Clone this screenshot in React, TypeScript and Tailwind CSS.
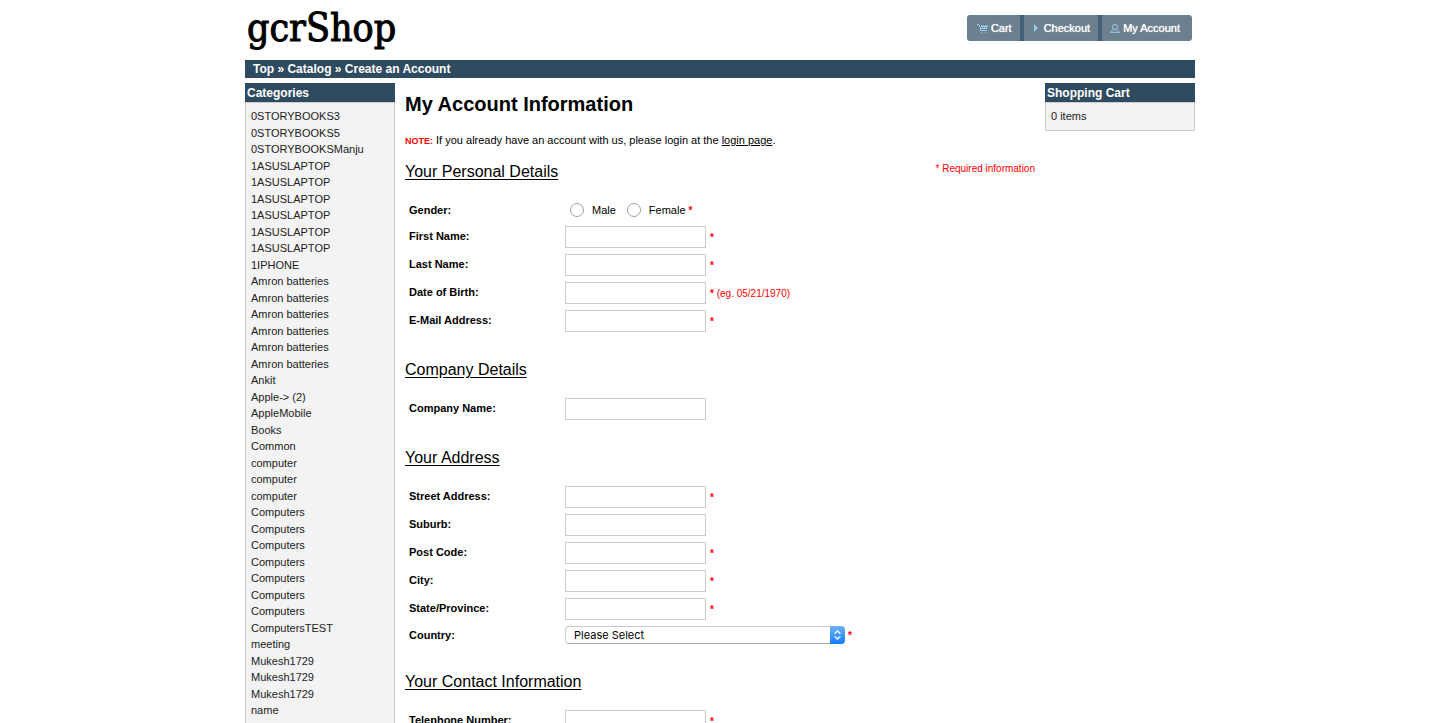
import React from "react";

const categories = [
  "0STORYBOOKS3", "0STORYBOOKS5", "0STORYBOOKSManju",
  "1ASUSLAPTOP", "1ASUSLAPTOP", "1ASUSLAPTOP", "1ASUSLAPTOP", "1ASUSLAPTOP", "1ASUSLAPTOP",
  "1IPHONE",
  "Amron batteries", "Amron batteries", "Amron batteries", "Amron batteries", "Amron batteries", "Amron batteries",
  "Ankit", "Apple-> (2)", "AppleMobile", "Books", "Common",
  "computer", "computer", "computer",
  "Computers", "Computers", "Computers", "Computers", "Computers", "Computers", "Computers",
  "ComputersTEST", "meeting", "Mukesh1729", "Mukesh1729", "Mukesh1729", "name", "Name",
];

function Star() {
  return <span className="text-[10px] font-bold text-[#f00]">*</span>;
}

function Row({ id, label, required, hint }: { id: string; label: string; required?: boolean; hint?: string }) {
  return (
    <div className="flex h-7 items-center pl-1">
      <label htmlFor={id} className="w-39 shrink-0 pb-0.5 font-bold">{label}</label>
      <input id={id} name={id} type="text" className="h-[22px] w-[141px] border border-[#ccc] bg-white px-1 outline-none" />
      {required && (
        <span className="pl-1 text-[10px] text-[#f00]">
          <Star />
          {hint && " " + hint}
        </span>
      )}
    </div>
  );
}

function Section({ title, children }: { title: string; children: React.ReactNode }) {
  return (
    <section className="mb-[23px]">
      <h2 className="mb-[13px] text-base leading-6 underline underline-offset-2">{title}</h2>
      {children}
    </section>
  );
}

function Radio({ id, label }: { id: string; label: string }) {
  return (
    <span className="flex items-center gap-2">
      <input
        id={id}
        type="radio"
        name="gender"
        className="size-3.5 appearance-none rounded-full border border-[#a0a0a0] bg-white checked:border-4 checked:border-[#1a7bf5]"
      />
      <label htmlFor={id}>{label}</label>
    </span>
  );
}

function CartIcon() {
  return (
    <svg width="11" height="9" viewBox="0 0 11 9" fill="#9ccbe9" shapeRendering="crispEdges" aria-hidden="true">
      <path d="M0 0h2v1H0zM2 1h1v2H2zM3 3h1v3H3zM3 6h7v1H3zM4 1h1v1H4zM6 1h1v1H6zM8 1h1v1H8zM10 1h1v1h-1zM4 2h7v1H4zM5 3h1v1H5zM7 3h1v1H7zM9 3h1v1H9zM4 4h6v1H4zM4 8h1v1H4zM8 8h1v1H8z" />
    </svg>
  );
}

function ArrowIcon() {
  return (
    <svg width="4" height="8" viewBox="0 0 4 8" fill="#9ccbe9" aria-hidden="true">
      <path d="M0 0l4 4-4 4z" />
    </svg>
  );
}

function PersonIcon() {
  return (
    <svg width="10" height="9" viewBox="0 0 10 9" fill="none" stroke="#9ccbe9" aria-hidden="true">
      <circle cx="5" cy="3" r="2.5" />
      <path d="M3.5 5.3 1 7.5M6.5 5.3 9 7.5M0 8.3h10" />
    </svg>
  );
}

function BoxTitle({ children }: { children: React.ReactNode }) {
  return <h2 className="bg-[#2f4b60] px-0.5 pt-px text-[12px] leading-[18px] font-bold text-white">{children}</h2>;
}

export default function App() {
  return (
    <div className="h-screen overflow-hidden bg-white text-[11px] leading-normal text-black [font-family:'Liberation_Sans',Arial,sans-serif]">
      <div className="mx-auto max-w-[950px]">
        <header className="flex h-15 items-start justify-between pr-[3px]">
          <a href="#" className="pl-0.5 text-[39px] leading-[56px] [-webkit-text-stroke:1px_#000] [font-family:'DejaVu_Serif_Condensed','DejaVu_Serif',serif]">gcrShop</a>
          <nav className="mt-[15px] flex h-[26px] gap-1 overflow-hidden rounded-[4px] bg-[#465f73] text-white [text-shadow:0_0_1px_#fff]">
            <a href="#" className="flex items-center gap-[3px] bg-[#6d808f] pr-2 pl-2.5"><CartIcon />Cart</a>
            <a href="#" className="flex items-center gap-1.5 bg-[#6d808f] pr-2 pl-2.5"><ArrowIcon />Checkout</a>
            <a href="#" className="flex items-center gap-[3px] bg-[#6d808f] pr-3 pl-2"><PersonIcon />My Account</a>
          </nav>
        </header>

        <nav className="bg-[#2f4b60] pl-2 text-[12px] leading-[18px] font-bold text-white">
          <a href="#">Top</a> » <a href="#">Catalog</a> » <a href="#">Create an Account</a>
        </nav>

        <div className="mt-[5px] flex gap-2.5">
          <aside className="w-[150px] shrink-0">
            <BoxTitle>Categories</BoxTitle>
            <ul className="border border-[#ccc] bg-[#f3f3f3] px-[5px] py-[5px] text-[#222]">
              {categories.map((name, i) => (
                <li key={i}><a href="#">{name}</a></li>
              ))}
            </ul>
          </aside>

          <main className="min-w-0 flex-1">
            <h1 className="pt-1.5 text-[20px] leading-[30px] font-bold">My Account Information</h1>
            <p className="mt-3 leading-[18px]">
              <strong className="text-[9px] text-[#f00]">NOTE:</strong> If you already have an account with us, please login at the{" "}
              <a href="#" className="underline">login page</a>.
            </p>
            <form className="mt-2.5">
              <span className="float-right mt-px text-[10px] text-[#f00]">* Required information</span>
              <Section title="Your Personal Details">
                <fieldset className="flex h-[26px] items-center pl-1">
                  <legend className="float-left w-39 shrink-0 font-bold">Gender:</legend>
                  <div className="flex items-center gap-[11px] pl-[5px]">
                    <Radio id="male" label="Male" />
                    <Radio id="female" label="Female" />
                  </div>
                  <span className="pl-[3px]"><Star /></span>
                </fieldset>
                <Row id="firstname" label="First Name:" required />
                <Row id="lastname" label="Last Name:" required />
                <Row id="dob" label="Date of Birth:" required hint="(eg. 05/21/1970)" />
                <Row id="email" label="E-Mail Address:" required />
              </Section>
              <Section title="Company Details">
                <Row id="company" label="Company Name:" />
              </Section>
              <Section title="Your Address">
                <Row id="street" label="Street Address:" required />
                <Row id="suburb" label="Suburb:" />
                <Row id="postcode" label="Post Code:" required />
                <Row id="city" label="City:" required />
                <Row id="state" label="State/Province:" required />
                <div className="flex h-6 items-center pl-1">
                  <label htmlFor="country" className="w-39 shrink-0 font-bold">Country:</label>
                  <span className="relative">
                    <select
                      id="country"
                      className="block h-[18px] w-[280px] appearance-none rounded-[4px] border border-[#ccc] border-b-[#aaa] bg-white pl-2 text-[11px] leading-4 [font-family:Inter,sans-serif]"
                    >
                      <option>Please Select</option>
                    </select>
                    <span className="pointer-events-none absolute inset-y-0 right-0 flex w-[15px] items-center justify-center rounded-r-[4px] bg-linear-to-b from-[#6bb3fa] to-[#0a7aff]">
                      <svg width="7" height="10" viewBox="0 0 7 10" fill="none" stroke="#fff" strokeWidth="1.3" strokeLinecap="round" aria-hidden="true">
                        <path d="M1 3.3 3.5 1 6 3.3M1 6.7 3.5 9 6 6.7" />
                      </svg>
                    </span>
                  </span>
                  <span className="pl-[3px]"><Star /></span>
                </div>
              </Section>
              <Section title="Your Contact Information">
                <Row id="telephone" label="Telephone Number:" required />
              </Section>
            </form>
          </main>

          <aside className="w-[150px] shrink-0">
            <BoxTitle>Shopping Cart</BoxTitle>
            <div className="border border-[#ccc] bg-[#f3f3f3] p-[5px] text-[#222]">0 items</div>
          </aside>
        </div>
      </div>
    </div>
  );
}
